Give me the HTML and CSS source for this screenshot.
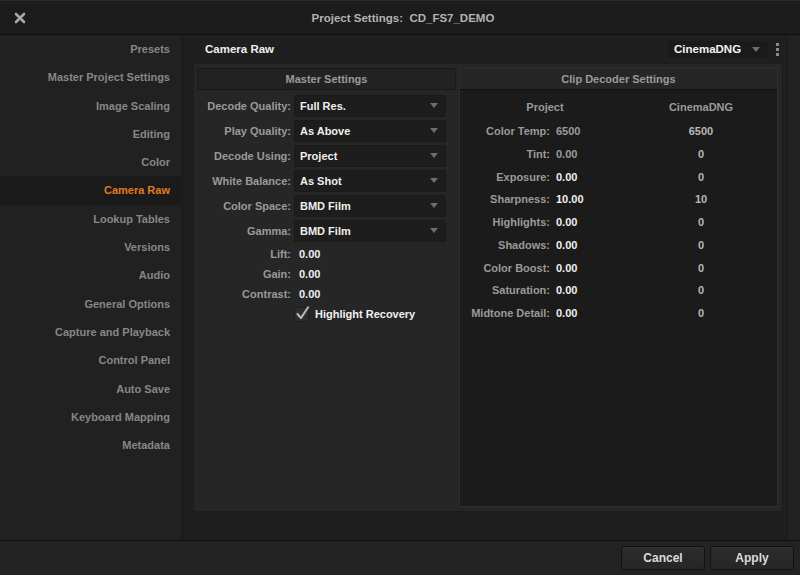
FILE: index.html
```html
<!DOCTYPE html>
<html>
<head>
<meta charset="utf-8">
<link rel="stylesheet" href="styles.css">
</head>
<body>
<div class="window">
  <header class="titlebar">
    <svg class="close" width="12" height="12" viewBox="0 0 12 12"><path d="M2 2 L10 10 M10 2 L2 10" stroke="#a8a8a8" stroke-width="2.6" stroke-linecap="round"/></svg>
    <div class="title">Project Settings:&nbsp; CD_FS7_DEMO</div>
  </header>
  <div class="content">
    <nav class="sidebar">
      <div class="nav-item">Presets</div>
      <div class="nav-item">Master Project Settings</div>
      <div class="nav-item">Image Scaling</div>
      <div class="nav-item">Editing</div>
      <div class="nav-item">Color</div>
      <div class="nav-item active">Camera Raw</div>
      <div class="nav-item">Lookup Tables</div>
      <div class="nav-item">Versions</div>
      <div class="nav-item">Audio</div>
      <div class="nav-item">General Options</div>
      <div class="nav-item">Capture and Playback</div>
      <div class="nav-item">Control Panel</div>
      <div class="nav-item">Auto Save</div>
      <div class="nav-item">Keyboard Mapping</div>
      <div class="nav-item">Metadata</div>
    </nav>
    <main class="main">
      <div class="main-head">
        <h2 class="page-title">Camera Raw</h2>
        <div class="select top-select"><span>CinemaDNG</span><i class="arrow"></i></div>
        <div class="kebab"><i></i><i></i><i></i></div>
      </div>
      <section class="panel">
        <div class="master">
          <div class="master-head">Master Settings</div>
          <div class="form">
            <div class="row"><span class="label">Decode Quality:</span><div class="select"><span>Full Res.</span><i class="arrow"></i></div></div>
            <div class="row"><span class="label">Play Quality:</span><div class="select"><span>As Above</span><i class="arrow"></i></div></div>
            <div class="row"><span class="label">Decode Using:</span><div class="select"><span>Project</span><i class="arrow"></i></div></div>
            <div class="row"><span class="label">White Balance:</span><div class="select"><span>As Shot</span><i class="arrow"></i></div></div>
            <div class="row"><span class="label">Color Space:</span><div class="select"><span>BMD Film</span><i class="arrow"></i></div></div>
            <div class="row"><span class="label">Gamma:</span><div class="select"><span>BMD Film</span><i class="arrow"></i></div></div>
            <div class="row plain"><span class="label">Lift:</span><span class="value">0.00</span></div>
            <div class="row plain"><span class="label">Gain:</span><span class="value">0.00</span></div>
            <div class="row plain"><span class="label">Contrast:</span><span class="value">0.00</span></div>
            <div class="row plain check-row"><span class="label"></span><span class="checkbox"><svg width="15" height="15" viewBox="0 0 15 15"><path d="M2.5 8 L6 12 L13 1.5" fill="none" stroke="#b4b4b4" stroke-width="2.2" stroke-linecap="round" stroke-linejoin="round"/></svg></span><span class="value">Highlight Recovery</span></div>
          </div>
        </div>
        <div class="clip">
          <div class="clip-head">Clip Decoder Settings</div>
          <div class="clip-grid">
            <div class="col-head span2">Project</div><div class="col-head">CinemaDNG</div>
            <div class="c-label">Color Temp:</div><div class="c-val dim">6500</div><div class="c-dng">6500</div>
            <div class="c-label">Tint:</div><div class="c-val dim">0.00</div><div class="c-dng">0</div>
            <div class="c-label">Exposure:</div><div class="c-val">0.00</div><div class="c-dng">0</div>
            <div class="c-label">Sharpness:</div><div class="c-val">10.00</div><div class="c-dng">10</div>
            <div class="c-label">Highlights:</div><div class="c-val">0.00</div><div class="c-dng">0</div>
            <div class="c-label">Shadows:</div><div class="c-val">0.00</div><div class="c-dng">0</div>
            <div class="c-label">Color Boost:</div><div class="c-val">0.00</div><div class="c-dng">0</div>
            <div class="c-label">Saturation:</div><div class="c-val">0.00</div><div class="c-dng">0</div>
            <div class="c-label">Midtone Detail:</div><div class="c-val">0.00</div><div class="c-dng">0</div>
          </div>
        </div>
      </section>
    </main>
    <div class="scrolltrack"></div>
  </div>
  <footer class="footer">
    <button class="btn">Cancel</button>
    <button class="btn">Apply</button>
  </footer>
</div>
</body>
</html>
```

FILE: styles.css
```css
* { box-sizing: border-box; }
html, body { margin: 0; padding: 0; background: #1d1d1d; }
body {
  font-family: "Liberation Sans", Arial, sans-serif;
  font-size: 11px;
  font-weight: bold;
  color: #9a9a9a;
}
.window {
  width: 800px;
  height: 575px;
  display: flex;
  flex-direction: column;
  background: #1f1f1f;
  overflow: hidden;
}
.titlebar {
  height: 35px;
  flex: none;
  display: flex;
  align-items: center;
  justify-content: center;
  position: relative;
  background: #1c1c1c;
  border-top: 1px solid #2a2a2a;
  border-bottom: 1px solid #0e0e0e;
}
.close { position: absolute; left: 14px; top: 11px; }
.title { font-size: 11.5px; color: #b3b3b3; margin-left: 6px; }

.content {
  flex: 1;
  display: flex;
  min-height: 0;
}
.sidebar {
  width: 184px;
  flex: none;
  background: #212121;
  border-right: 3px solid #1c1c1c;
}
.nav-item {
  height: 28.3px;
  line-height: 28.3px;
  text-align: right;
  padding-right: 11px;
  color: #878787;
}
.nav-item.active { background: #1a1a1a; color: #e07b22; }

.main {
  flex: 1;
  display: flex;
  flex-direction: column;
  padding: 0 4px 28px 9px;
  background: #1f1f1f;
}
.main-head {
  height: 28px;
  flex: none;
  display: flex;
  align-items: center;
  padding-right: 4px;
}
.page-title {
  margin: 0 auto 0 12px;
  font-size: 11.5px;
  color: #f0f0f0;
}
.select {
  display: flex;
  align-items: center;
  justify-content: space-between;
  background: #1d1d1d;
  border: 1px solid #1a1a1a;
  border-radius: 2px;
  color: #efefef;
  padding: 0 7px 0 5px;
}
.top-select {
  width: 100px;
  height: 17px;
  background: #1a1a1a;
  font-size: 11.5px;
  color: #f2f2f2;
}
.arrow {
  width: 0; height: 0;
  border-left: 4px solid transparent;
  border-right: 4px solid transparent;
  border-top: 5px solid #6e6e6e;
}
.kebab {
  margin-left: 8px;
  display: flex;
  flex-direction: column;
  gap: 2px;
}
.kebab i { display: block; width: 3px; height: 3px; background: #8a8a8a; }

.panel {
  flex: 1;
  display: flex;
  gap: 3px;
  padding: 4px 4px 4px 3px;
  background: #262626;
  border: 1px solid #1c1c1c;
}
.master { width: 259px; flex: none; }
.master-head {
  height: 22px;
  line-height: 20px;
  text-align: center;
  background: #222;
  border: 1px solid #1a1a1a;
  color: #9a9a9a;
}
.form { padding-top: 3px; }
.row {
  height: 25px;
  display: flex;
  align-items: center;
}
.row .select { width: 152px; height: 22px; }
.label {
  width: 97px;
  flex: none;
  text-align: right;
  padding-right: 3px;
  color: #9a9a9a;
}
.row.plain { height: 20px; }
.row.plain:nth-child(7) { margin-top: 1px; }
.value { color: #f0f0f0; padding-left: 5px; }
.check-row .value { padding-left: 6px; }
.checkbox {
  width: 15px;
  height: 15px;
  background: #2c2c2c;
  border: 1px solid #1e1e1e;
  border-radius: 2px;
  position: relative;
}
.checkbox svg { position: absolute; left: 0; top: -2px; }

.clip {
  flex: 1;
  background: #1b1b1b;
  border: 1px solid #2e2e2e;
  display: flex;
  flex-direction: column;
}
.clip-head {
  height: 21px;
  line-height: 20px;
  text-align: center;
  background: #262626;
  border-bottom: 1px solid #0f0f0f;
  color: #9a9a9a;
}
.clip-grid {
  display: grid;
  grid-template-columns: 96px 74px 142px;
  grid-auto-rows: 22.75px;
  align-items: center;
  padding-top: 7px;
}
.col-head { color: #999; text-align: center; height: 22.75px; line-height: 20px; margin-bottom: 3px; }
.span2 { grid-column: span 2; }
.clip-grid > .col-head { align-self: start; }
.c-label { text-align: right; padding-right: 6px; color: #9a9a9a; }
.c-val { color: #f0f0f0; }
.c-val.dim { color: #9c9c9c; }
.c-dng { text-align: center; color: #b8b8b8; }

.scrolltrack {
  width: 13px;
  flex: none;
  background: #222;
  border-left: 1px solid #1a1a1a;
}

.footer {
  height: 35px;
  flex: none;
  display: flex;
  justify-content: flex-end;
  align-items: center;
  gap: 5px;
  padding: 0 6px 0 0;
  background: #232323;
  border-top: 1px solid #0d0d0d;
}
.btn {
  width: 84px;
  height: 24px;
  font-family: "Liberation Sans", Arial, sans-serif;
  font-size: 12px;
  font-weight: bold;
  color: #dcdcdc;
  background: linear-gradient(#2c2c2c, #262626);
  border: 1px solid #111;
  border-radius: 3px;
  box-shadow: inset 0 1px 0 #333;
}
```
